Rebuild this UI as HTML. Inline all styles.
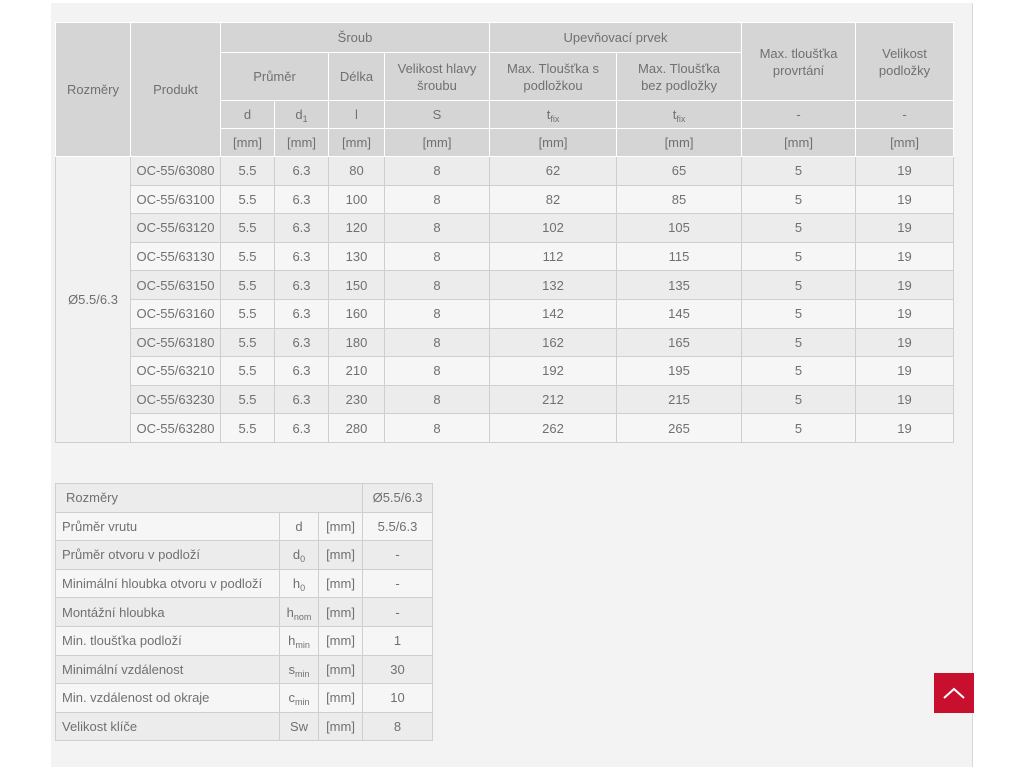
<!DOCTYPE html>
<html><head><meta charset="utf-8"><style>
body{margin:0;background:#fff;width:1024px;height:768px;overflow:hidden;font-family:"Liberation Sans","DejaVu Sans",sans-serif;color:#707070;font-size:13px}
.panel{position:absolute;left:51px;top:3px;width:921px;height:764px;background:#f3f3f3;border-right:1px solid #d8d8d8}
table{border-collapse:collapse;table-layout:fixed;position:absolute}
td{text-align:center;padding:0;line-height:17px;overflow:hidden;white-space:nowrap}
#t1{left:55px;top:22px;width:898px}
#t1 .h td{background:#d5d5d5;border:1px solid #fff;white-space:normal;padding:0 10px}
#t1 .b td{border:1px solid #cfcfcf}
.b.o td{background:#ececec}.b.e td{background:#f6f6f6}
#t1 td.rz{background:#f1f1f1!important}
sub{font-size:9px;vertical-align:-3px;line-height:0}
#t2{left:55px;top:483px;width:377px}
#t2 td{border:1px solid #cfcfcf;height:27.6px}
#t2 td.l{text-align:left;padding-left:6px}
.top{position:absolute;left:934px;top:673px;width:40px;height:40px;background:#c8102e}
</style></head><body>
<div class="panel"></div>
<table id="t1">
<colgroup><col style="width:75px"><col style="width:90px"><col style="width:54px"><col style="width:54px"><col style="width:56px"><col style="width:105px"><col style="width:127px"><col style="width:125px"><col style="width:114px"><col style="width:98px"></colgroup>
<tr class="h" style="height:30px"><td rowspan="4">Rozměry</td><td rowspan="4">Produkt</td><td colspan="4">Šroub</td><td colspan="2">Upevňovací prvek</td><td rowspan="2">Max. tloušťka provrtání</td><td rowspan="2">Velikost podložky</td></tr>
<tr class="h" style="height:48px"><td colspan="2">Průměr</td><td style="padding:0">Délka</td><td style="padding:0 6px">Velikost hlavy šroubu</td><td>Max. Tloušťka s podložkou</td><td style="padding:0 18px">Max. Tloušťka bez podložky</td></tr>
<tr class="h" style="height:28px"><td>d</td><td>d<sub>1</sub></td><td>l</td><td>S</td><td>t<sub>fix</sub></td><td>t<sub>fix</sub></td><td>-</td><td>-</td></tr>
<tr class="h" style="height:28px"><td style="padding:0">[mm]</td><td style="padding:0">[mm]</td><td style="padding:0">[mm]</td><td>[mm]</td><td>[mm]</td><td>[mm]</td><td>[mm]</td><td>[mm]</td></tr>
<tr class="b o" style="height:28.6px"><td class="rz" rowspan="10">Ø5.5/6.3</td><td>OC-55/63080</td><td>5.5</td><td>6.3</td><td>80</td><td>8</td><td>62</td><td>65</td><td>5</td><td>19</td></tr>
<tr class="b e" style="height:28.6px"><td>OC-55/63100</td><td>5.5</td><td>6.3</td><td>100</td><td>8</td><td>82</td><td>85</td><td>5</td><td>19</td></tr>
<tr class="b o" style="height:28.6px"><td>OC-55/63120</td><td>5.5</td><td>6.3</td><td>120</td><td>8</td><td>102</td><td>105</td><td>5</td><td>19</td></tr>
<tr class="b e" style="height:28.6px"><td>OC-55/63130</td><td>5.5</td><td>6.3</td><td>130</td><td>8</td><td>112</td><td>115</td><td>5</td><td>19</td></tr>
<tr class="b o" style="height:28.6px"><td>OC-55/63150</td><td>5.5</td><td>6.3</td><td>150</td><td>8</td><td>132</td><td>135</td><td>5</td><td>19</td></tr>
<tr class="b e" style="height:28.6px"><td>OC-55/63160</td><td>5.5</td><td>6.3</td><td>160</td><td>8</td><td>142</td><td>145</td><td>5</td><td>19</td></tr>
<tr class="b o" style="height:28.6px"><td>OC-55/63180</td><td>5.5</td><td>6.3</td><td>180</td><td>8</td><td>162</td><td>165</td><td>5</td><td>19</td></tr>
<tr class="b e" style="height:28.6px"><td>OC-55/63210</td><td>5.5</td><td>6.3</td><td>210</td><td>8</td><td>192</td><td>195</td><td>5</td><td>19</td></tr>
<tr class="b o" style="height:28.6px"><td>OC-55/63230</td><td>5.5</td><td>6.3</td><td>230</td><td>8</td><td>212</td><td>215</td><td>5</td><td>19</td></tr>
<tr class="b e" style="height:28.6px"><td>OC-55/63280</td><td>5.5</td><td>6.3</td><td>280</td><td>8</td><td>262</td><td>265</td><td>5</td><td>19</td></tr>
</table>
<table id="t2">
<colgroup><col style="width:224px"><col style="width:39px"><col style="width:44px"><col style="width:70px"></colgroup>
<tr class="b o"><td class="l" colspan="3" style="padding-left:10px">Rozměry</td><td>Ø5.5/6.3</td></tr>
<tr class="b e"><td class="l">Průměr vrutu</td><td>d</td><td>[mm]</td><td>5.5/6.3</td></tr>
<tr class="b o"><td class="l">Průměr otvoru v podloží</td><td>d<sub>0</sub></td><td>[mm]</td><td>-</td></tr>
<tr class="b e"><td class="l">Minimální hloubka otvoru v podloží</td><td>h<sub>0</sub></td><td>[mm]</td><td>-</td></tr>
<tr class="b o"><td class="l">Montážní hloubka</td><td>h<sub>nom</sub></td><td>[mm]</td><td>-</td></tr>
<tr class="b e"><td class="l">Min. tloušťka podloží</td><td>h<sub>min</sub></td><td>[mm]</td><td>1</td></tr>
<tr class="b o"><td class="l">Minimální vzdálenost</td><td>s<sub>min</sub></td><td>[mm]</td><td>30</td></tr>
<tr class="b e"><td class="l">Min. vzdálenost od okraje</td><td>c<sub>min</sub></td><td>[mm]</td><td>10</td></tr>
<tr class="b o"><td class="l">Velikost klíče</td><td>Sw</td><td>[mm]</td><td>8</td></tr>
</table>
<div class="top"><svg width="40" height="40" viewBox="0 0 40 40"><path d="M10 25 L20 16 L30 25" fill="none" stroke="#fff" stroke-width="2"/></svg></div>
</body></html>
